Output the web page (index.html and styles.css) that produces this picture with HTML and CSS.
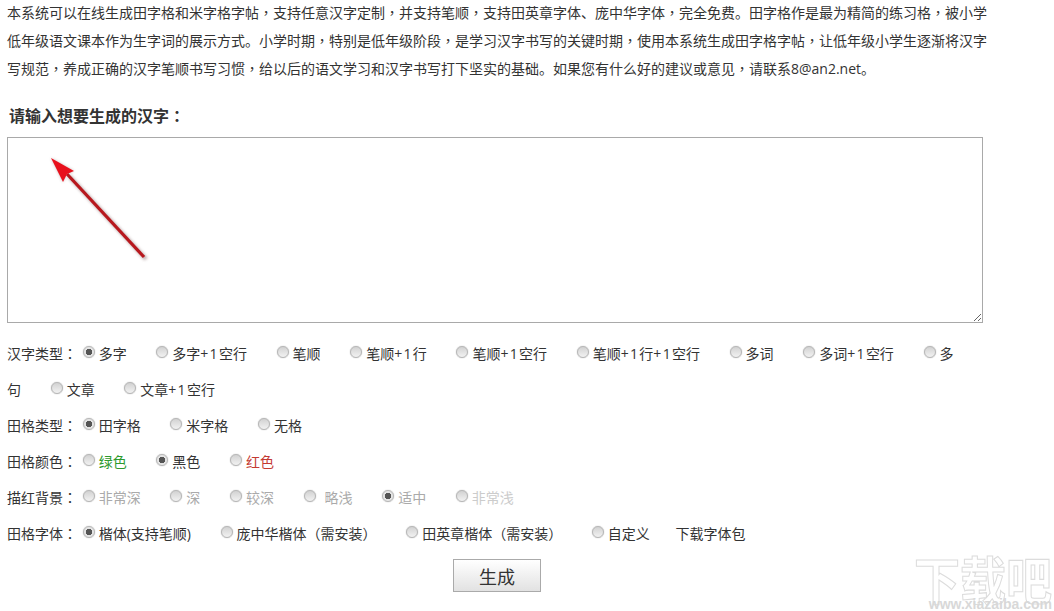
FILE: index.html
```html
<!DOCTYPE html>
<html>
<head>
  <meta charset="UTF-8" />
  <title>田字格字帖生成</title>
  <link rel="stylesheet" href="styles.css">
</head>
<body>
  <div class="container">
    <p class="intro">本系统可以在线生成田字格和米字格字帖<span class="pc">，</span>支持任意汉字定制<span class="pc">，</span>并支持笔顺<span class="pc">，</span>支持田英章字体、庞中华字体<span class="pc">，</span>完全免费。田字格作是最为精简的练习格<span class="pc">，</span>被小学低年级语文课本作为生字词的展示方式。小学时期<span class="pc">，</span>特别是低年级阶段<span class="pc">，</span>是学习汉字书写的关键时期<span class="pc">，</span>使用本系统生成田字格字帖<span class="pc">，</span>让低年级小学生逐渐将汉字写规范<span class="pc">，</span>养成正确的汉字笔顺书写习惯<span class="pc">，</span>给以后的语文学习和汉字书写打下坚实的基础。如果您有什么好的建议或意见<span class="pc">，</span>请联系8@an2.net。</p>

    <h3 class="title">请输入想要生成的汉字<span class="pc">：</span></h3>

    <div class="input-box">
      <textarea class="hanzi"></textarea>
      <svg class="arrow" width="110" height="120" viewBox="0 0 110 120">
        <defs>
          <filter id="glow" x="-20%" y="-20%" width="140%" height="140%">
            <feGaussianBlur stdDeviation="1.6" />
          </filter>
        </defs>
        <g transform="translate(-40,-150)">
          <path d="M146 259 L69 176" stroke="#8a6a6a" stroke-width="3.8" opacity=".6" filter="url(#glow)" fill="none" />
          <path d="M51 158 L74 171 L67 174 L63 182 Z" fill="#8a6a6a" opacity=".45" filter="url(#glow)" />
          <path d="M144 257 L67 174" stroke="#b8181e" stroke-width="3.2" fill="none" />
          <path d="M51 158 L74 171 L67 174 L63 182 Z" fill="#e8101c" />
        </g>
      </svg>
    </div>

    <div class="row row-type">
      <span class="name">汉字类型<span class="pc">：</span></span>
      <label class="opt"><input type="radio" name="t" checked>多字</label>
      <label class="opt"><input type="radio" name="t">多字<span class="pl">+1</span>空行</label>
      <label class="opt"><input type="radio" name="t">笔顺</label>
      <label class="opt"><input type="radio" name="t">笔顺<span class="pl">+1</span>行</label>
      <label class="opt"><input type="radio" name="t">笔顺<span class="pl">+1</span>空行</label>
      <label class="opt"><input type="radio" name="t">笔顺<span class="pl">+1</span>行<span class="pl">+1</span>空行</label>
      <label class="opt"><input type="radio" name="t">多词</label>
      <label class="opt"><input type="radio" name="t">多词<span class="pl">+1</span>空行</label>
      <label class="opt"><input type="radio" name="t">多句</label>
      <label class="opt"><input type="radio" name="t">文章</label>
      <label class="opt"><input type="radio" name="t">文章<span class="pl">+1</span>空行</label>
    </div>

    <div class="row">
      <span class="name">田格类型<span class="pc">：</span></span>
      <label class="opt"><input type="radio" name="g" checked>田字格</label>
      <label class="opt"><input type="radio" name="g">米字格</label>
      <label class="opt"><input type="radio" name="g">无格</label>
    </div>

    <div class="row">
      <span class="name">田格颜色<span class="pc">：</span></span>
      <label class="opt green"><input type="radio" name="c">绿色</label>
      <label class="opt"><input type="radio" name="c" checked>黑色</label>
      <label class="opt red"><input type="radio" name="c">红色</label>
    </div>

    <div class="row">
      <span class="name">描红背景<span class="pc">：</span></span>
      <label class="opt shade1"><input type="radio" name="b">非常深</label>
      <label class="opt shade1"><input type="radio" name="b">深</label>
      <label class="opt shade1"><input type="radio" name="b">较深</label>
      <label class="opt shade1 pad"><input type="radio" name="b">略浅</label>
      <label class="opt shade1"><input type="radio" name="b" checked>适中</label>
      <label class="opt shade2"><input type="radio" name="b">非常浅</label>
    </div>

    <div class="row">
      <span class="name">田格字体<span class="pc">：</span></span>
      <label class="opt"><input type="radio" name="f" checked>楷体(支持笔顺)</label>
      <label class="opt"><input type="radio" name="f">庞中华楷体<span class="pc">（</span>需安装<span class="pc">）</span></label>
      <label class="opt"><input type="radio" name="f">田英章楷体<span class="pc">（</span>需安装<span class="pc">）</span></label>
      <label class="opt"><input type="radio" name="f">自定义</label>
      <a class="download">下载字体包</a>
    </div>

    <div class="actions">
      <button class="make">生成</button>
    </div>
  </div>

  <div class="watermark">
    <div class="wm-big">下载吧</div>
    <div class="wm-small">www.xiazaiba.com</div>
  </div>
</body>
</html>
```

FILE: styles.css
```css
html, body { margin: 0; padding: 0; height: 100%; overflow: hidden; }
body { position: relative; background: #fff; color: #333; font-family: "Open Sans", "Noto Sans CJK SC", sans-serif; font-size: 14px; }
.container { width: 980px; margin-left: 7px; }
.pc { font-family: "Noto Sans CJK TC", sans-serif; line-height: 1; }
.pl { letter-spacing: 1.3px; }

.intro { margin: 0; line-height: 28px; margin-top: -1px; }
.title { margin: 21px 0 0 2px; font-size: 16px; line-height: 24px; font-weight: bold; color: #333; }

.input-box { position: relative; width: 976px; margin-top: 9px; height: 186px; }
.hanzi { display: block; box-sizing: border-box; width: 976px; height: 186px; margin: 0; border: 1px solid #a9a9a9; background: #fff; }
.arrow { position: absolute; left: 33px; top: 13px; pointer-events: none; }

.row { line-height: 36px; }
.row-type { margin-top: 13px; width: 955px; }
.name { display: inline-block; width: 70px; }
.opt { margin-right: 24px; }
.row .opt:last-child { margin-right: 0; }
.opt input {
  appearance: none;
  -webkit-appearance: none;
  box-sizing: border-box;
  width: 12px;
  height: 12px;
  margin: 0 4px 0 2px;
  border: 1px solid #b4b4b4;
  border-radius: 50%;
  background: linear-gradient(#d2d2d2, #f2f2f2);
  box-shadow: 0 0 1px #999;
  vertical-align: 1px;
}
.opt input:checked { background: radial-gradient(circle, #555 0, #555 3px, #e4e4e4 3.5px, #ececec 100%); }
.green { color: #2e9a2e; }
.red { color: #c43a32; }
.shade1 { color: #aaa; }
.shade2 { color: #ccc; }
.pad input { margin-right: 9px; }
.download { margin-left: -2px; color: #333; }

.actions { text-align: center; margin-top: 7px; }
.make {
  box-sizing: border-box;
  width: 88px;
  height: 33px;
  padding: 0;
  border: 1px solid #aaa;
  background: linear-gradient(#fff, #e2e2e2);
  color: #333;
  font-family: inherit;
  font-size: 18px;
}

.watermark { position: absolute; right: 0; bottom: 0; width: 140px; height: 56px; color: #fff; }
.wm-big { font-size: 46px; line-height: 50px; font-weight: bold; -webkit-text-stroke: 1px #dcdcdc; white-space: nowrap; transform: scaleY(1.12); }
.wm-small { position: absolute; right: 2px; bottom: 0; font-family: "Liberation Sans", sans-serif; font-size: 14px; line-height: 14px; color: #d8d8d8; font-weight: bold; }
```
